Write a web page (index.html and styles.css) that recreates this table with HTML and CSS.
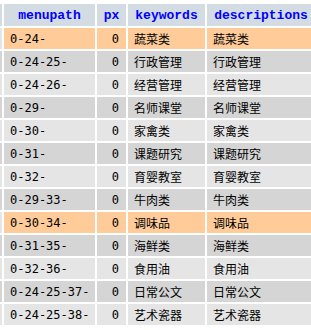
FILE: index.html
```html
<!DOCTYPE html>
<html>
<head>
<meta charset="utf-8">
<link rel="stylesheet" href="styles.css">
</head>
<body>
<table class="grid">
  <colgroup>
    <col class="c-cut"><col class="c-path"><col class="c-px"><col class="c-kw"><col class="c-desc">
  </colgroup>
  <thead>
    <tr><th class="cut"></th><th>menupath</th><th>px</th><th>keywords</th><th>descriptions</th></tr>
  </thead>
  <tbody>
    <tr class="odd marked"><td class="cut"></td><td>0-24-</td><td class="num">0</td><td>蔬菜类</td><td>蔬菜类</td></tr>
    <tr class="even"><td class="cut"></td><td>0-24-25-</td><td class="num">0</td><td>行政管理</td><td>行政管理</td></tr>
    <tr class="odd"><td class="cut"></td><td>0-24-26-</td><td class="num">0</td><td>经营管理</td><td>经营管理</td></tr>
    <tr class="even"><td class="cut"></td><td>0-29-</td><td class="num">0</td><td>名师课堂</td><td>名师课堂</td></tr>
    <tr class="odd"><td class="cut"></td><td>0-30-</td><td class="num">0</td><td>家禽类</td><td>家禽类</td></tr>
    <tr class="even"><td class="cut"></td><td>0-31-</td><td class="num">0</td><td>课题研究</td><td>课题研究</td></tr>
    <tr class="odd"><td class="cut"></td><td>0-32-</td><td class="num">0</td><td>育婴教室</td><td>育婴教室</td></tr>
    <tr class="even"><td class="cut"></td><td>0-29-33-</td><td class="num">0</td><td>牛肉类</td><td>牛肉类</td></tr>
    <tr class="odd marked"><td class="cut"></td><td>0-30-34-</td><td class="num">0</td><td>调味品</td><td>调味品</td></tr>
    <tr class="even"><td class="cut"></td><td>0-31-35-</td><td class="num">0</td><td>海鲜类</td><td>海鲜类</td></tr>
    <tr class="odd"><td class="cut"></td><td>0-32-36-</td><td class="num">0</td><td>食用油</td><td>食用油</td></tr>
    <tr class="even"><td class="cut"></td><td>0-24-25-37-</td><td class="num">0</td><td>日常公文</td><td>日常公文</td></tr>
    <tr class="odd"><td class="cut"></td><td>0-24-25-38-</td><td class="num">0</td><td>艺术瓷器</td><td>艺术瓷器</td></tr>
  </tbody>
</table>
</body>
</html>
```
FILE: styles.css
```css
html, body {
  margin: 0;
  padding: 0;
  background: #ffffff;
  overflow: hidden;
}

.grid {
  table-layout: fixed;
  border-collapse: separate;
  border-spacing: 2px;
  margin: 2px 0 0 -20px;
  width: 337px;
  font-family: "DejaVu Sans Mono", "Noto Sans CJK SC", monospace;
  font-size: 12px;
  color: #000000;
}

.c-cut { width: 20px; }
.c-path { width: 91px; }
.c-px { width: 29px; }
.c-kw { width: 77px; }
.c-desc { width: 108px; }

.grid th, .grid td {
  box-sizing: border-box;
  padding: 0 6px;
  white-space: nowrap;
  overflow: hidden;
}

.grid th {
  height: 22px;
  padding: 0 4px;
  background: #d3dce3;
  color: #0000ff;
  font-family: "Liberation Mono", monospace;
  font-weight: bold;
  font-size: 13px;
  text-align: center;
}

.grid td {
  height: 21px;
  text-align: left;
}

.grid td.num {
  text-align: right;
  padding-right: 7px;
}

.odd td { background: #e5e5e5; }
.even td { background: #d5d5d5; }
.marked td { background: #ffcc99; }
.marked td.cut { background: #e5e5e5; }
```
